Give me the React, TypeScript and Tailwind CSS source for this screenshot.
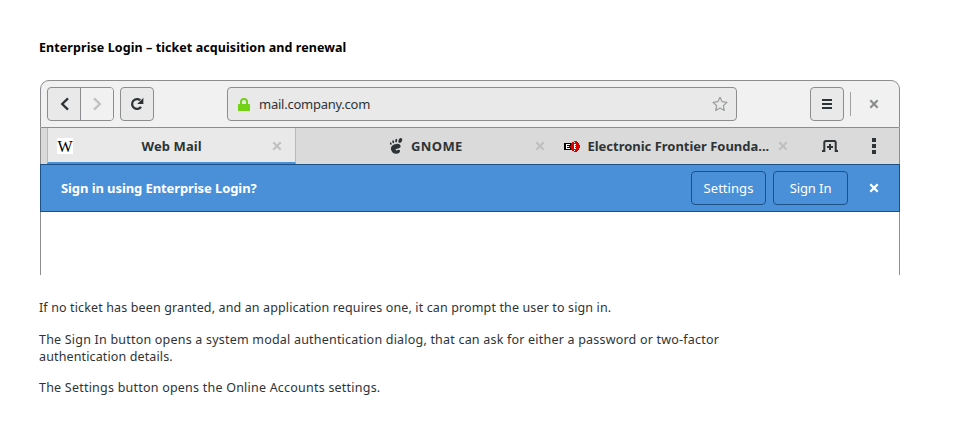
import React from "react";

const INK = "#2e3436";

function Cross({ color }: { color: string }) {
  return (
    <svg width="10" height="10" viewBox="0 0 10 10" className="shrink-0" fill="none" stroke={color} strokeWidth="2.2">
      <path d="M1.3 1.3 8.7 8.7M8.7 1.3 1.3 8.7" />
    </svg>
  );
}

function Chevron({ color, flip }: { color: string; flip?: boolean }) {
  return (
    <svg width="16" height="16" viewBox="0 0 16 16" className={flip ? "-scale-x-100" : "translate-x-px"} fill="none" stroke={color} strokeWidth="2.3">
      <path d="M11 2.4 5.2 8 11 13.6" />
    </svg>
  );
}

function Reload() {
  return (
    <svg width="16" height="16" viewBox="0 0 16 16" fill="none">
      <path d="M11.2 4.2A4.9 4.9 0 1 0 12 10.8" stroke={INK} strokeWidth="2.3" />
      <path d="M14.4 1.8V8H8.2z" fill={INK} />
    </svg>
  );
}

function Foot() {
  return (
    <svg width="14" height="16" viewBox="0 0 14 16" fill={INK}>
      <ellipse cx="11.3" cy="2.5" rx="1.7" ry="2.6" transform="rotate(25 11.3 2.5)" />
      <ellipse cx="7.2" cy="2.6" rx="1" ry="1.8" transform="rotate(8 7.2 2.6)" />
      <ellipse cx="4.2" cy="3.8" rx=".9" ry="1.5" transform="rotate(-12 4.2 3.8)" />
      <ellipse cx="1.8" cy="5.6" rx=".8" ry="1.3" transform="rotate(-25 1.8 5.6)" />
      <path d="M11.6 8.4C11.8 5.6 8.5 5.2 5.8 6.2 2.5 7.4 1.2 9.3 2.4 12.5c.9 2.3 2.7 3.5 5 3.3 2.5-.2 4-1.8 3.6-3.3-.4-1.2-1.6-.9-2.4-.4-.9.6-2 .4-2-.5 0-1.2 4.8-.8 5-3.2z" />
    </svg>
  );
}

function Eff() {
  return (
    <svg width="16" height="11" viewBox="0 0 16 11" className="shrink-0" shapeRendering="crispEdges">
      <path d="M0 2h8v7H0z" fill="#000" />
      <path d="M5 5h2V2h1V1h2V0h3v1h1v1h1v2h1v3h-1v2h-1v1h-1v1h-3v-1H8V9H7V6H5z" fill="#d90000" />
      <path d="M2 3h4v1H3v1h2v1H3v1h3v1H2zM10 1h1v1h-1zM10 3h2v1h-1v1h1v1h-1v1h1v1h-2zM10 9h1v1h-1z" fill="#fff" />
    </svg>
  );
}

function NewTab() {
  return (
    <svg width="16" height="12" viewBox="0 0 16 12" fill="none" stroke={INK}>
      <path d="M0 11h2.3V2.6Q2.3 1 3.8 1h8.4q1.5 0 1.5 1.6V11H16" strokeWidth="2" />
      <path d="M8 4v6M5 7h6" strokeWidth="2" />
    </svg>
  );
}

export default function App() {
  return (
    <div className="h-[440px] w-[960px] overflow-hidden bg-white font-['Noto_Sans',sans-serif] text-[13px] leading-[17px] text-[#2e3436]">
      <h1 className="ml-[39px] mt-[39px] whitespace-nowrap text-[12.5px] font-bold tracking-[0.08px] text-black">
        Enterprise Login – ticket acquisition and renewal
      </h1>

      <div className="ml-10 mt-6 h-[195px] w-[860px]">
        <header className="flex h-12 items-center rounded-t-[9px] border border-[#8b8e8f] bg-[#f1f1f1] pl-[6px]">
          <div className="flex h-[34px] w-[67px] overflow-hidden rounded-[4px] border border-[#8b8e8f] bg-[#e9e9e9]">
            <button className="flex w-[33px] items-center justify-center border-r border-[#8b8e8f]"><Chevron color={INK} /></button>
            <button className="flex flex-1 items-center justify-center bg-[#f1f1f1]"><Chevron color="#c0c0c0" flip /></button>
          </div>
          <button className="ml-[6px] flex h-[34px] w-[34px] items-center justify-center rounded-[4px] border border-[#8b8e8f] bg-[#e9e9e9]"><Reload /></button>
          <div className="ml-[73px] flex h-[34px] w-[510px] items-center rounded-[4px] border border-[#8b8e8f] bg-[#e9e9e9] pl-[10px] pr-2">
            <svg width="12" height="13" viewBox="0 0 12 13">
              <path d="M3 7V4a3 3 0 0 1 6 0v3" fill="none" stroke="#73d216" strokeWidth="2" />
              <rect y="6" width="12" height="7" rx=".6" fill="#73d216" />
            </svg>
            <span className="ml-[9px] text-[13px] tracking-[-0.25px]">mail.company.com</span>
            <svg width="16" height="16" viewBox="0 0 16 16" className="ml-auto" fill="none" stroke="#9a9c9d" strokeWidth="1.2" strokeLinejoin="round">
              <path d="M8 1.3l2.1 4.4 4.9.6-3.6 3.3.9 4.9L8 12.1l-4.3 2.4.9-4.9L1 6.3l4.9-.6z" />
            </svg>
          </div>
          <button className="ml-[73px] flex h-[34px] w-[34px] items-center justify-center rounded-[4px] border border-[#8b8e8f] bg-[#e9e9e9]">
            <svg width="10" height="10" viewBox="0 0 10 10" fill={INK} shapeRendering="crispEdges"><path d="M0 0h10v2H0zM0 4h10v2H0zM0 8h10v2H0z" /></svg>
          </button>
          <div className="ml-[6px] h-6 w-px bg-[#a0a2a2]" />
          <div className="ml-[18px]"><Cross color="#8b8e8f" /></div>
        </header>

        <nav className="flex h-9 border-x border-[#8b8e8f] bg-[#dadada] text-[13px] font-bold">
          <div className="ml-[6px] flex w-[249px] items-center border-x border-b-2 border-x-[#b9b9b9] border-b-[#4a90d9] bg-[#e9e9e9] pl-[9px] pr-[13px] pt-[2px]">
            <span className="flex h-4 w-4 items-center justify-center bg-white pt-px font-['Liberation_Serif',serif] text-[16px] font-normal leading-4 text-black">W</span>
            <span className="ml-[68.5px] tracking-[0.1px]">Web Mail</span>
            <span className="ml-auto flex"><Cross color="#c0c0c0" /></span>
          </div>
          <div className="flex w-[249px] items-center pl-[93px]">
            <Foot />
            <span className="ml-[8px] tracking-[0.4px]">GNOME</span>
            <span className="ml-auto flex"><Cross color="#c0c0c0" /></span>
          </div>
          <div className="flex w-[243px] items-center pl-[19px]">
            <Eff />
            <span className="ml-[7.5px] whitespace-nowrap tracking-[-0.02px]">Electronic Frontier Founda...</span>
            <span className="ml-auto flex"><Cross color="#c0c0c0" /></span>
          </div>
          <button className="ml-[34px] flex items-center"><NewTab /></button>
          <button className="ml-[34px] flex items-center">
            <svg width="4" height="16" viewBox="0 0 4 16" fill={INK} shapeRendering="crispEdges"><path d="M0 0h4v4H0zM0 6h4v4H0zM0 12h4v4H0z" /></svg>
          </button>
        </nav>

        <section className="flex h-12 items-center border border-[#1c5187] bg-[#4a90d9] pl-5 text-white">
          <span className="whitespace-nowrap text-[13px] font-bold tracking-[-0.09px]">Sign in using Enterprise Login?</span>
          <button className="ml-auto flex h-[34px] w-[75px] items-center justify-center rounded-[4px] border border-[#1c5187] tracking-[0.05px]">Settings</button>
          <button className="ml-[7px] flex h-[34px] w-[75px] items-center justify-center rounded-[4px] border border-[#1c5187] tracking-[-0.1px]">Sign In</button>
          <div className="ml-[21px] mr-5 flex"><Cross color="#fff" /></div>
        </section>
        <div className="h-[63px] border-x border-[#8b8e8f]" />
      </div>

      <div className="ml-[39px] mt-6 flex flex-col gap-[14px] whitespace-nowrap text-[12.5px]">
        <p><span className="tracking-[0.13px]">If no ticket has been granted, and an application requires one, it can prompt the user to sign in.</span></p>
        <p className="mt-px">
          <span className="tracking-[0.205px]">The Sign In button opens a system modal authentication dialog, that can ask for either a password or two-factor</span>
          <br />
          <span className="tracking-[0.13px]">authentication details.</span>
        </p>
        <p><span className="tracking-[0.22px]">The Settings button opens the Online Accounts settings.</span></p>
      </div>
    </div>
  );
}
